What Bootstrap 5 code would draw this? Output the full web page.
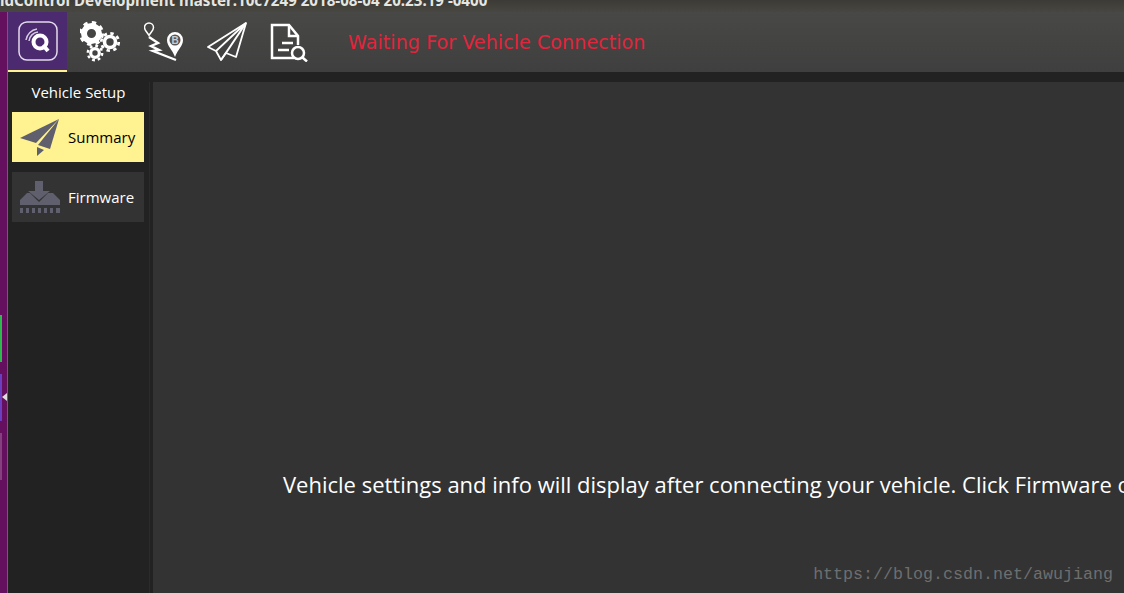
<!DOCTYPE html>
<html lang="en">
<head>
    <meta charset="UTF-8">
    <title>QGroundControl</title>
    <link href="https://cdn.jsdelivr.net/npm/bootstrap@5.3.0/dist/css/bootstrap.min.css" rel="stylesheet">
    <style>
        html, body { height: 100%; }
        body {
            background-color: #222;
            font-family: "Open Sans", "Noto Sans", sans-serif;
            overflow: hidden;
        }
        .title-bar {
            height: 12px;
            background: linear-gradient(#3c3b37, #47463f);
            color: #e6e6e0;
            font: 700 15.14px/12px "Noto Sans", sans-serif;
            white-space: nowrap;
        }
        .title-bar span { display: block; margin-top: -6px; }
        .desk-strip {
            width: 8px;
            background-color: #65105f;
            border-right: 1px solid #8a4a86;
            padding-top: 303px;
            position: relative;
        }
        .strip-tab { width: 2px; height: 47px; margin-bottom: 12px; }
        .strip-arrow {
            position: absolute;
            left: 2px;
            top: 381px;
            border-top: 4px solid transparent;
            border-bottom: 4px solid transparent;
            border-right: 5px solid #ddd;
        }
        .tool-bar {
            height: 60px;
            background: linear-gradient(#484846, #3f3f3f);
        }
        .tool-logo {
            width: 59px;
            background-color: #4b2a6f;
            border-bottom: 2px solid #fff291;
        }
        .tool-icon { width: 63px; }
        .tool-gears { margin-left: 2px; }
        .tool-status {
            color: #e1253c;
            font: 19.2px "DejaVu Sans", sans-serif;
            margin-left: 27px;
        }
        .side-pane { width: 142px; border-right: 1px solid #2b2b2b; margin-top: 10px; }
        .side-title { color: #fff; font-size: 15px; height: 30px; line-height: 21px; }
        .side-btn {
            width: 132px;
            height: 50px;
            margin: 0 0 10px 4px;
            padding: 1px 0 0 8px;
            background-color: #333;
            color: #fff;
            font-size: 15px;
        }
        .side-btn.is-active { background-color: #fff291; color: #000; }
        .main-pane {
            margin: 10px 0 0 3px;
            background-color: #333;
            color: #fff;
            font-size: 22px;
            padding: 386px 0 0 130px;
            white-space: nowrap;
            overflow: hidden;
            position: relative;
        }
        .watermark {
            position: absolute;
            right: 11px;
            bottom: 9px;
            color: #6e6e6e;
            font: 16.67px "Liberation Mono", monospace;
        }
    </style>
</head>
<body>
<div class="d-flex flex-column h-100">
    <div class="title-bar overflow-hidden flex-shrink-0"><span>ldControl Development master:10c7249 2018-08-04 20:23:19 -0400</span></div>

    <div class="d-flex flex-grow-1" style="min-height:0">
        <div class="desk-strip flex-shrink-0">
            <div class="strip-tab" style="background:#2fb84f"></div>
            <div class="strip-tab" style="background:#6a3fc0"></div>
            <div class="strip-tab" style="background:#85407f"></div>
            <div class="strip-arrow"></div>
        </div>

        <div class="d-flex flex-column flex-grow-1" style="min-width:0">
            <div class="tool-bar d-flex flex-shrink-0">
                <div class="tool-logo d-flex align-items-center justify-content-center">
                    <svg width="40" height="40" viewBox="0 0 40 40" fill="none" stroke="#fff">
                        <rect x="1" y="1" width="38" height="38" rx="8" stroke="#e4dcec" stroke-width="1.5"/>
                        <circle cx="22" cy="21" r="6.5" stroke-width="4"/>
                        <path d="M25 24l5 6" stroke-width="4"/>
                        <path d="M11 20a10 10 0 0 1 9-9" stroke="#d5cbe0" stroke-width="1.5"/>
                        <path d="M8 19a13 13 0 0 1 11-11" stroke="#d5cbe0" stroke-width="1.5"/>
                    </svg>
                </div>
                <div class="tool-icon tool-gears d-flex align-items-center justify-content-center">
                    <svg width="41" height="42" viewBox="0 0 41 42" fill="none" stroke="#fff">
                        <circle cx="11.500" cy="12.500" r="7.500" stroke-width="6"/>
                        <circle cx="11.500" cy="12.500" r="11" stroke-width="3" stroke-dasharray="4.320 4.320"/>
                        <circle cx="30" cy="21" r="5.500" stroke-width="3.600"/>
                        <circle cx="30" cy="21" r="8.700" stroke-width="2.800" stroke-dasharray="3.420 3.420"/>
                        <circle cx="15" cy="32" r="4.300" stroke-width="3.200"/>
                        <circle cx="15" cy="32" r="7.200" stroke-width="2.400" stroke-dasharray="2.830 2.830"/>
                    </svg>
                </div>
                <div class="tool-icon d-flex align-items-center justify-content-center">
                    <svg width="40" height="40" viewBox="0 0 40 40" fill="none" stroke="#fff" stroke-width="2.400">
                        <path d="M5 1a4.500 4.500 0 0 1 4.500 4.500c0 3-2.500 4.500-4.500 8-2-3.500-4.500-5-4.500-8A4.500 4.500 0 0 1 5 1z" stroke-width="1.500"/>
                        <path d="M5 15l9 6-7 3 8 4-6 1 23 9"/>
                        <path d="M31 10a8 8 0 0 1 8 8c0 6-5 9-8 17-3-8-8-11-8-17a8 8 0 0 1 8-8z" fill="#fff" stroke="none"/>
                        <circle cx="31" cy="18" r="5.500" fill="#555" stroke="none"/>
                        <text x="31" y="22" font-family="Liberation Sans" font-size="10" font-weight="700" fill="#ccc" stroke="none" text-anchor="middle">B</text>
                    </svg>
                </div>
                <div class="tool-icon d-flex align-items-center justify-content-center">
                    <svg width="40" height="40" viewBox="0 0 40 40" fill="none" stroke="#fff" stroke-width="1.800" stroke-linejoin="round">
                        <path d="M39 1L1 25l8 4 5 9 5-7 10 4z"/>
                        <path d="M39 1L9 29M39 1L14 38M39 1L19 31"/>
                    </svg>
                </div>
                <div class="tool-icon d-flex align-items-center justify-content-center">
                    <svg width="39" height="39" viewBox="0 0 39 39" fill="none" stroke="#fff" stroke-width="2.500">
                        <path d="M24 35H2V2h17l9 11v9"/>
                        <path d="M19 2v11h9M12 20h11M8 27h11"/>
                        <circle cx="28" cy="30" r="6"/>
                        <path d="M32.500 34.500L37 38.500"/>
                    </svg>
                </div>
                <div class="tool-status align-self-center">Waiting For Vehicle Connection</div>
            </div>

            <div class="d-flex flex-grow-1" style="min-height:0">
                <div class="side-pane flex-shrink-0">
                    <div class="side-title text-center">Vehicle Setup</div>
                    <div class="side-btn is-active d-flex align-items-center gap-2">
                        <svg width="40" height="38" viewBox="0 0 40 38" fill="#5f5f6d" class="flex-shrink-0">
                            <path d="M39 0L0 19l16 5z"/>
                            <path d="M39 0L18 26l12 4z"/>
                            <path d="M17 28v9l7-6z"/>
                        </svg>
                        <span>Summary</span>
                    </div>
                    <div class="side-btn d-flex align-items-center gap-2">
                        <svg width="40" height="33" viewBox="0 0 40 33" fill="#5f5f6d" class="flex-shrink-0">
                            <path d="M15 0h8v10h7L19 19 8 10h7z"/>
                            <path d="M0 24v-5l7-7h3l9 9 9-9h5l7 7v5z"/>
                            <path d="M0 27h3v5H0zM6 27h3v5H6zM12 27h3v5h-3zM18 27h3v5h-3zM24 27h3v5h-3zM30 27h3v5h-3zM36 27h4v5h-4z"/>
                        </svg>
                        <span>Firmware</span>
                    </div>
                </div>
                <div class="main-pane flex-grow-1">
                    Vehicle settings and info will display after connecting your vehicle. Click Firmware on the left to upgrade your vehicle.
                    <div class="watermark">https://blog.csdn.net/awujiang</div>
                </div>
            </div>
        </div>
    </div>
</div>
<script src="https://cdn.jsdelivr.net/npm/bootstrap@5.3.0/dist/js/bootstrap.bundle.min.js"></script>
</body>
</html>
